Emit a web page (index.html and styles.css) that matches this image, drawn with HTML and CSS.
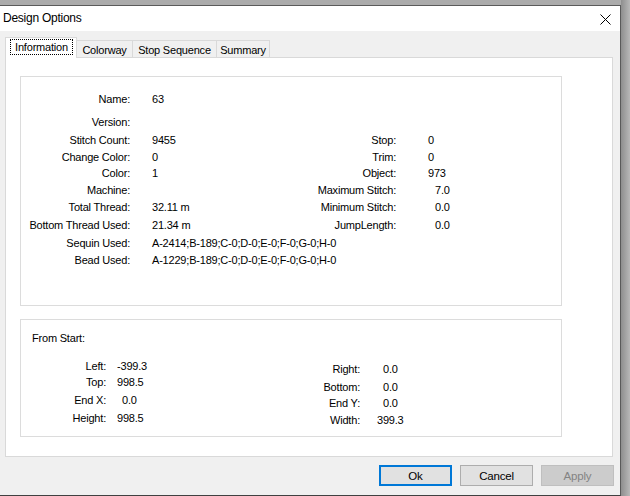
FILE: index.html
```
<!DOCTYPE html>
<html>
<head>
<meta charset="utf-8">
<link rel="stylesheet" href="styles.css">
</head>
<body>
<div class="screen">
  <div class="dialog">
    <div class="titlebar">
      <span class="title">Design Options</span>
      <svg class="close" width="11" height="11" viewBox="0 0 11 11"><path d="M0.5 0.5 L10.5 10.5 M10.5 0.5 L0.5 10.5" stroke="#000" stroke-width="1" fill="none"/></svg>
    </div>
    <div class="body">
      <div class="tabs">
        <div class="tab sel"><span class="focus">Information</span></div>
        <div class="tab t-color">Colorway</div>
        <div class="tab t-stop">Stop Sequence</div>
        <div class="tab t-sum">Summary</div>
      </div>
      <div class="panel">
        <div class="group g1">
          <div class="grid1">
            <div class="l1">Name:</div><div class="v1">63</div>
            <div class="l1">Version:</div><div class="v1"></div>
            <div class="l1">Stitch Count:</div><div class="v1">9455</div><div class="l2">Stop:</div><div class="v2">0</div>
            <div class="l1">Change Color:</div><div class="v1">0</div><div class="l2">Trim:</div><div class="v2">0</div>
            <div class="l1">Color:</div><div class="v1">1</div><div class="l2">Object:</div><div class="v2">973</div>
            <div class="l1">Machine:</div><div class="v1"></div><div class="l2">Maximum Stitch:</div><div class="v2 f">7.0</div>
            <div class="l1">Total Thread:</div><div class="v1">32.11 m</div><div class="l2">Minimum Stitch:</div><div class="v2 f">0.0</div>
            <div class="l1">Bottom Thread Used:</div><div class="v1">21.34 m</div><div class="l2">JumpLength:</div><div class="v2 f">0.0</div>
            <div class="l1">Sequin Used:</div><div class="vw">A-2414;B-189;C-0;D-0;E-0;F-0;G-0;H-0</div>
            <div class="l1">Bead Used:</div><div class="vw">A-1229;B-189;C-0;D-0;E-0;F-0;G-0;H-0</div>
          </div>
        </div>
        <div class="group g2">
          <div class="from">From Start:</div>
          <div class="cols">
            <div class="gl">
              <div class="lab">Left:</div><div class="val">-399.3</div>
              <div class="lab">Top:</div><div class="val">998.5</div>
              <div class="lab">End X:</div><div class="val sh">0.0</div>
              <div class="lab">Height:</div><div class="val">998.5</div>
            </div>
            <div class="gr">
              <div class="lab">Right:</div><div class="val">0.0</div>
              <div class="lab">Bottom:</div><div class="val">0.0</div>
              <div class="lab">End Y:</div><div class="val">0.0</div>
              <div class="lab">Width:</div><div class="val wide">399.3</div>
            </div>
          </div>
        </div>
      </div>
      <div class="buttons">
        <div class="btn ok">Ok</div>
        <div class="btn">Cancel</div>
        <div class="btn dis">Apply</div>
      </div>
    </div>
  </div>
  <div class="shadow"></div>
</div>
</body>
</html>
```
FILE: styles.css
```
html, body {
  margin: 0;
  padding: 0;
}
body {
  width: 630px;
  height: 496px;
  overflow: hidden;
  background: #ababab;
  font-family: "Liberation Sans", Arial, sans-serif;
  font-size: 11px;
  letter-spacing: -0.2px;
  color: #000;
}
.screen {
  display: flex;
  height: 496px;
}
.dialog {
  margin-top: 5px;
  width: 620px;
  height: 489px;
  border-top: 1px solid #5a5a5a;
  border-right: 1px solid #5a5a5a;
  border-bottom: 1px solid #404040;
  display: flex;
  flex-direction: column;
}
.shadow {
  flex: 1;
  background: linear-gradient(to right, #8e8e8e, #b8b8b8);
}
.titlebar {
  height: 25px;
  background: #fff;
  display: flex;
  align-items: center;
  justify-content: space-between;
  padding-left: 3px;
  padding-right: 9px;
}
.title {
  font-size: 12px;
  letter-spacing: -0.25px;
  margin-top: -1px;
}
.close {
  display: block;
  margin-top: 1px;
}
.body {
  flex: 1;
  background: #f0f0f0;
  padding-top: 7px;
}
.tabs {
  display: flex;
  align-items: flex-end;
  height: 20px;
  margin-bottom: -1px;
  padding-left: 5px;
  position: relative;
  z-index: 1;
}
.tab {
  box-sizing: border-box;
  height: 17px;
  border-top: 1px solid #d9d9d9;
  border-right: 1px solid #d9d9d9;
  background: #f0f0f0;
  display: flex;
  align-items: center;
  justify-content: center;
  padding-top: 1px;
  margin-bottom: 1px;
}
.tab.sel {
  width: 72px;
  height: 21px;
  border: 1px solid #d9d9d9;
  border-bottom: none;
  background: #fff;
  margin-bottom: 0;
  padding-top: 0;
  padding-bottom: 2px;
}
.focus {
  border: 1px dotted #000;
  padding: 0 4px 0 4px;
  line-height: 14px;
  margin-left: 1px;
}
.t-color { width: 56px; }
.t-stop { width: 84px; }
.t-sum { width: 53px; }
.panel {
  box-sizing: border-box;
  margin-left: 5px;
  width: 608px;
  height: 400px;
  border: 1px solid #d9d9d9;
  background: #fff;
  padding-top: 18px;
  padding-left: 14px;
}
.group {
  box-sizing: border-box;
  width: 542px;
  border: 1px solid #dcdcdc;
}
.g1 {
  height: 230px;
  padding-top: 14px;
}
.grid1 {
  display: grid;
  grid-template-columns: 109px 166px 100px auto;
  grid-template-rows: 23px 18px 17px 16px 17px 17px 18px 18px 17px 16px;
  line-height: 16px;
  white-space: nowrap;
}
.l1 { grid-column: 1; text-align: right; }
.v1 { grid-column: 2; padding-left: 22px; }
.l2 { grid-column: 3; text-align: right; }
.v2 { grid-column: 4; padding-left: 32px; }
.v2.f { padding-left: 39px; }
.vw { grid-column: 2 / 5; padding-left: 22px; }
.g2 {
  margin-top: 13px;
  height: 118px;
  padding-top: 10px;
}
.from {
  padding-left: 11px;
  line-height: 16px;
}
.cols {
  display: flex;
  margin-top: 12px;
  line-height: 16px;
  white-space: nowrap;
}
.gl {
  width: 279px;
  display: grid;
  grid-template-columns: 85px auto;
  grid-template-rows: 16px 18px 18px 16px;
}
.gr {
  margin-top: 3px;
  display: grid;
  grid-template-columns: 60px auto;
  grid-template-rows: 18px 16px 17px 16px;
}
.lab { text-align: right; }
.gl .val { padding-left: 11px; }
.gl .val.sh { padding-left: 16px; }
.gr .val { padding-left: 23px; }
.gr .val.wide { padding-left: 17px; }
.buttons {
  display: flex;
  justify-content: flex-end;
  gap: 8px;
  margin-top: 8px;
  padding-right: 6px;
}
.btn {
  box-sizing: border-box;
  width: 73px;
  height: 21px;
  border: 1px solid #adadad;
  background: #e1e1e1;
  display: flex;
  align-items: center;
  justify-content: center;
  font-size: 11.5px;
}
.btn.ok {
  border: 2px solid #0078d7;
}
.btn.dis {
  background: #cccccc;
  border-color: #bfbfbf;
  color: #838383;
}
```
